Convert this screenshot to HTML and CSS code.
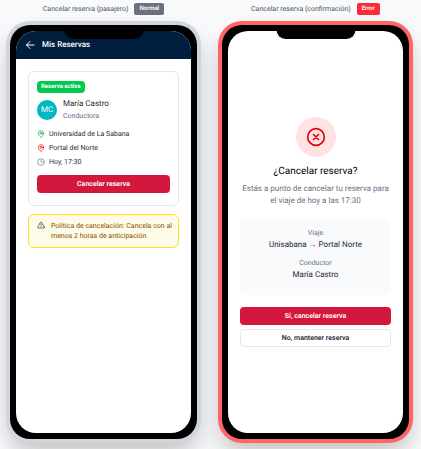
FILE: index.html
```html
<!DOCTYPE html>
<html lang="es">
<head>
<meta charset="utf-8">
<meta name="viewport" content="width=device-width, initial-scale=1">
<title>Cancelar reserva</title>
<link rel="stylesheet" href="styles.css">
</head>
<body>
<main class="board">
  <section class="mockup">
    <div class="caption"><span>Cancelar reserva (pasajero)</span><span class="tag">Normal</span></div>
    <div class="phone">
      <div class="notch"></div>
      <div class="screen">
        <header class="topbar">
          <button class="back" type="button" aria-label="Volver">
            <svg class="icon-back" viewBox="0 0 24 24"><path d="M12 19l-7-7 7-7M5 12h15"/></svg>
          </button>
          <h1 class="topbar-title">Mis Reservas</h1>
        </header>
        <div class="content">
          <article class="card">
            <span class="status">Reserva activa</span>
            <div class="driver">
              <div class="avatar">MC</div>
              <div>
                <div class="name">María Castro</div>
                <div class="role">Conductora</div>
              </div>
            </div>
            <ul class="trip">
              <li><svg class="icon green" viewBox="0 0 24 24"><path d="M20 10c0 5-5.500 10.200-7.400 11.800a1 1 0 0 1-1.200 0C9.500 20.200 4 15 4 10a8 8 0 0 1 16 0z"/><circle cx="12" cy="10" r="3"/></svg>Universidad de La Sabana</li>
              <li><svg class="icon red" viewBox="0 0 24 24"><path d="M20 10c0 5-5.500 10.200-7.400 11.800a1 1 0 0 1-1.200 0C9.500 20.200 4 15 4 10a8 8 0 0 1 16 0z"/><circle cx="12" cy="10" r="3"/></svg>Portal del Norte</li>
              <li><svg class="icon gray" viewBox="0 0 24 24"><circle cx="12" cy="12" r="10"/><path d="M12 6v6l4 2"/></svg>Hoy, 17:30</li>
            </ul>
            <button class="btn btn-danger" type="button">Cancelar reserva</button>
          </article>
          <div class="notice">
            <svg class="icon dark" viewBox="0 0 24 24"><path d="M21.700 18l-8-14a2 2 0 0 0-3.500 0l-8 14A2 2 0 0 0 4 21h16a2 2 0 0 0 1.700-3zM12 9v4M12 17v.1"/></svg>
            <p>Política de cancelación: Cancela con al<br>menos 2 horas de anticipación</p>
          </div>
        </div>
      </div>
    </div>
  </section>

  <section class="mockup">
    <div class="caption"><span>Cancelar reserva (confirmación)</span><span class="tag tag-error">Error</span></div>
    <div class="phone phone-error">
      <div class="notch"></div>
      <div class="screen confirm">
        <div class="alert-circle">
          <svg class="icon-cross" viewBox="0 0 24 24"><circle cx="12" cy="12" r="10"/><path d="M15 9l-6 6M9 9l6 6"/></svg>
        </div>
        <h2 class="question">¿Cancelar reserva?</h2>
        <p class="explain">Estás a punto de cancelar tu reserva para<br>el viaje de hoy a las 17:30</p>
        <dl class="summary">
          <dt>Viaje</dt>
          <dd>Unisabana → Portal Norte</dd>
          <dt>Conductor</dt>
          <dd>María Castro</dd>
        </dl>
        <div class="actions">
          <button class="btn btn-danger" type="button">Sí, cancelar reserva</button>
          <button class="btn btn-outline" type="button">No, mantener reserva</button>
        </div>
      </div>
    </div>
  </section>
</main>
</body>
</html>
```
FILE: styles.css
```css
* {
  box-sizing: border-box;
  margin: 0;
  padding: 0;
}

body {
  background: #f9fafb;
  color: #1f2937;
  font: 8px/12px Roboto, "Open Sans", sans-serif;
  text-rendering: geometricPrecision;
  overflow: hidden;
}

button {
  font: inherit;
  text-rendering: inherit;
}

.board {
  display: grid;
  grid-template-columns: repeat(2, minmax(0, 1fr));
  gap: 25px;
  padding: 3px 12px 10px 10px;
}

.caption {
  display: flex;
  justify-content: center;
  align-items: center;
  gap: 6px;
  height: 12px;
  margin-bottom: 10px;
  color: #4a5565;
  font-size: 7px;
  white-space: nowrap;
}

.tag {
  padding: 0 5px;
  border-radius: 2px;
  background: #6a7282;
  color: #fff;
  font-size: 6px;
  font-weight: 600;
}

.tag-error {
  background: #fb2c36;
}

.phone {
  position: relative;
  aspect-ratio: 187 / 414;
  padding: 6px;
  border-radius: 20px;
  background: #000;
  box-shadow: 0 0 0 4px #d1d5dc, 0 12px 25px rgba(0, 0, 0, 0.25);
}

.phone-error {
  box-shadow: 0 0 0 4px #ff6467, 0 12px 25px rgba(0, 0, 0, 0.25);
}

.notch {
  position: absolute;
  top: 5px;
  left: 50%;
  width: 79px;
  height: 9px;
  border-radius: 0 0 9px 9px;
  background: #000;
  transform: translateX(-50%);
}

.screen {
  height: 100%;
  border-radius: 20px;
  background: #fff;
  overflow: hidden;
}

.topbar {
  display: flex;
  align-items: center;
  gap: 6px;
  height: 28px;
  padding: 0 8px;
  background: #001f3f;
  color: #fff;
}

.back {
  display: flex;
  border: 0;
  background: none;
  color: inherit;
}

svg {
  flex: none;
  fill: none;
  stroke: currentColor;
  stroke-width: 2;
  stroke-linecap: round;
  stroke-linejoin: round;
}

.icon-back {
  width: 12px;
  height: 12px;
}

.topbar-title {
  font-size: 8px;
  font-weight: 500;
}

.content {
  display: grid;
  gap: 8px;
  padding: 12px;
}

.card {
  padding: 9px 8px 12px;
  border: 1px solid #e5e7eb;
  border-radius: 6px;
}

.status {
  display: block;
  width: fit-content;
  padding: 0 4px;
  border-radius: 4px;
  background: #00c950;
  color: #fff;
  font-size: 6px;
  font-weight: 700;
}

.driver {
  display: flex;
  align-items: center;
  gap: 6px;
  margin: 5px 0;
}

.avatar {
  width: 20px;
  border-radius: 50%;
  background: #00b8c4;
  color: #fff;
  line-height: 20px;
  text-align: center;
}

.role {
  color: #5b7083;
  font-size: 7px;
}

.trip {
  margin-bottom: 6px;
  font-size: 7px;
  line-height: 14px;
  list-style: none;
}

.trip li {
  display: flex;
  align-items: center;
  gap: 4px;
}

.icon {
  width: 8px;
  height: 8px;
}

.green {
  color: #00a63e;
}

.red {
  color: #e7000b;
}

.gray {
  color: #6a7282;
}

.dark {
  color: #1f2937;
}

.btn {
  display: block;
  width: 100%;
  height: 18px;
  border: 0;
  border-radius: 4px;
  font-size: 7px;
  font-weight: 600;
}

.btn-danger {
  background: #d4183d;
  color: #fff;
}

.btn-outline {
  border: 1px solid #e5e7eb;
  background: #fff;
  color: #1f2937;
}

.notice {
  display: flex;
  gap: 6px;
  padding: 6px 0 6px 8px;
  border: 1px solid #ffdf20;
  border-radius: 6px;
  background: #fefce8;
  color: #894b00;
  font-size: 7px;
  line-height: 10px;
}

.confirm {
  display: flex;
  flex-direction: column;
  align-items: center;
  justify-content: center;
  padding: 0 12px;
  text-align: center;
}

.alert-circle {
  display: grid;
  place-items: center;
  width: 40px;
  height: 40px;
  margin-bottom: 8px;
  border-radius: 50%;
  background: #ffe2e2;
  color: #e7000b;
}

.icon-cross {
  width: 20px;
  height: 20px;
}

.question {
  margin-bottom: 4px;
  color: #000;
  font-size: 10px;
  font-weight: 400;
  line-height: 14px;
}

.explain {
  color: #6a7282;
  white-space: nowrap;
}

.summary {
  width: 100%;
  margin: 12px 0;
  padding: 8px;
  border-radius: 6px;
  background: #f9fafb;
}

.summary dt {
  color: #6a7282;
  font-size: 7px;
}

.summary dd {
  margin-bottom: 6px;
}

.actions {
  display: grid;
  gap: 4px;
  width: 100%;
}
```
